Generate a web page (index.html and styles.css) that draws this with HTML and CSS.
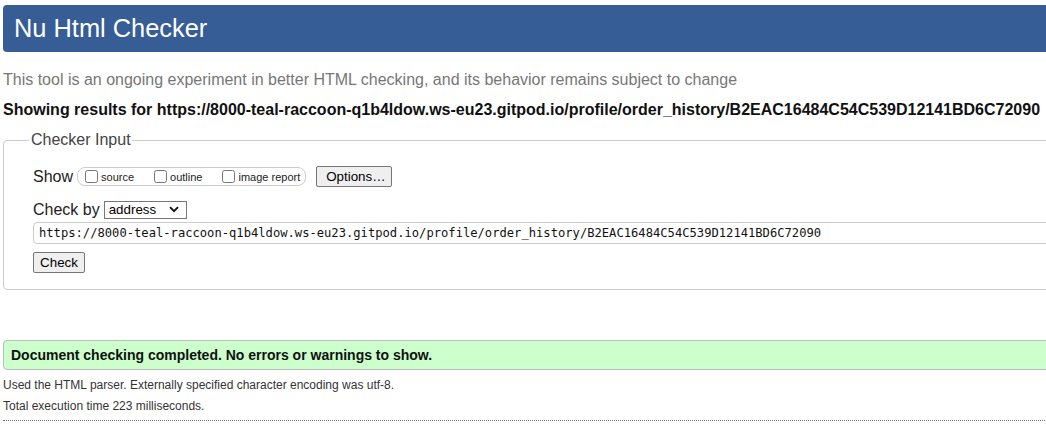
FILE: index.html
```html
<!DOCTYPE html>
<html lang="en">
<head>
<meta charset="utf-8">
<title>Showing results for https://8000-teal-raccoon-q1b4ldow.ws-eu23.gitpod.io/profile/order_history/B2EAC16484C54C539D12141BD6C72090 - Nu Html Checker</title>
<link rel="stylesheet" href="styles.css">
</head>
<body>
<div class="page">
  <h1 class="banner">Nu Html Checker</h1>
  <p class="intro">This tool is an ongoing experiment in better HTML checking, and its behavior remains subject to change</p>
  <p class="results-for">Showing results for https://8000-teal-raccoon-q1b4ldow.ws-eu23.gitpod.io/profile/order_history/B2EAC16484C54C539D12141BD6C72090</p>
  <form class="checker">
    <fieldset class="checker-fieldset">
      <legend class="checker-legend">Checker Input</legend>
      <div class="row show-row">
        <span class="row-label">Show</span>
        <span class="show-group">
          <label class="opt"><input type="checkbox" class="cb"><span class="opt-text">source</span></label>
          <label class="opt"><input type="checkbox" class="cb"><span class="opt-text">outline</span></label>
          <label class="opt last"><input type="checkbox" class="cb"><span class="opt-text">image report</span></label>
        </span>
        <button type="button" class="btn options-btn">Options…</button>
      </div>
      <div class="row checkby-row">
        <span class="row-label">Check by</span>
        <span class="select-wrap">
          <select class="select"><option>address</option></select>
          <svg class="chev" width="10" height="7" viewBox="0 0 10 7"><path d="M1 1.2 L5 5.2 L9 1.2" fill="none" stroke="#111" stroke-width="1.9"/></svg>
        </span>
      </div>
      <div class="row url-row">
        <input class="url" type="url" value="https://8000-teal-raccoon-q1b4ldow.ws-eu23.gitpod.io/profile/order_history/B2EAC16484C54C539D12141BD6C72090">
      </div>
      <div class="row submit-row">
        <button type="button" class="btn check-btn">Check</button>
      </div>
    </fieldset>
  </form>
  <div class="success">Document checking completed. No errors or warnings to show.</div>
  <p class="details">Used the HTML parser. Externally specified character encoding was utf-8.</p>
  <p class="details">Total execution time 223 milliseconds.</p>
  <hr class="dotted">
</div>
</body>
</html>
```
FILE: styles.css
```css
html, body {
  margin: 0;
  padding: 0;
  overflow: hidden;
  background: #fff;
}
body {
  font-family: "Liberation Sans", Arial, sans-serif;
  color: #111;
}
.page {
  padding: 5px 0 0 3px;
  width: 1080px;
}
.banner {
  margin: 0;
  height: 47px;
  line-height: 47px;
  padding-left: 11px;
  background: #365d95;
  color: #fff;
  font-size: 25.4px;
  font-weight: normal;
  border-radius: 4px;
}
.intro {
  margin: 19px 0 0;
  font-size: 16px;
  line-height: 18px;
  color: #777;
}
.results-for {
  margin: 12px 0 0;
  font-size: 16px;
  line-height: 18px;
  font-weight: bold;
  color: #111;
}
.checker {
  margin: 12px 0 0;
}
.checker-fieldset {
  margin: 0;
  padding: 17px 0 16px 29px;
  border: 1px solid #ccc;
  border-radius: 4px;
  min-width: 0;
}
.checker-legend {
  margin-left: -4px;
  padding: 0 1px 0 2px;
  font-size: 16px;
  line-height: 18px;
  color: #444;
}
.row {
  display: flex;
  align-items: center;
}
.row-label {
  font-size: 16px;
  line-height: 18px;
  color: #222;
}
.show-row {
  height: 21px;
}
.show-group {
  display: inline-flex;
  align-items: center;
  margin-left: 4px;
  height: 17px;
  padding: 0 5px 0 3px;
  border: 1px solid #ccc;
  border-radius: 8px;
}
.opt {
  display: inline-flex;
  align-items: center;
  font-size: 11px;
  color: #222;
  padding-right: 16px;
}
.opt-text {
  line-height: 13px;
  padding-top: 2px;
}
.opt.last {
  padding-right: 0;
}
.cb {
  width: 13px;
  height: 13px;
  margin: 0 3px 0 4px;
}
.btn {
  font-family: "Liberation Sans", Arial, sans-serif;
  font-size: 13.33px;
  color: #000;
  background: #efefef;
  border: 1px solid #767676;
  border-radius: 2px;
  height: 21px;
  line-height: 17px;
  padding: 0 6px;
}
.options-btn {
  margin-left: 10px;
  padding: 0 9px;
  width: 76px;
}
.checkby-row {
  margin-top: 13px;
  height: 20px;
}
.select-wrap {
  position: relative;
  display: inline-flex;
  margin-left: 4px;
}
.select {
  -webkit-appearance: none;
  appearance: none;
  width: 83px;
  height: 18px;
  padding: 0 0 0 4px;
  font-family: "Liberation Sans", Arial, sans-serif;
  font-size: 13.33px;
  line-height: 16px;
  color: #000;
  background: #fff;
  border: 1px solid #767676;
  border-radius: 0;
}
.chev {
  position: absolute;
  right: 8px;
  top: 5px;
  pointer-events: none;
}
.url-row {
  margin-top: 2px;
}
.url {
  width: 1040px;
  height: 22px;
  box-sizing: border-box;
  padding: 0 0 0 5px;
  font-family: "DejaVu Sans Mono", "Liberation Mono", monospace;
  font-size: 12.15px;
  color: #111;
  border: 1px solid #ccc;
  border-radius: 4px;
  background: #fff;
}
.submit-row {
  margin-top: 8px;
}
.check-btn {
  width: 52px;
}
.success {
  margin-top: 50px;
  height: 28px;
  line-height: 28px;
  padding-left: 7px;
  background: #ccffcc;
  border: 1px solid #bbb;
  border-radius: 4px;
  font-size: 14px;
  font-weight: bold;
  color: #111;
}
.details {
  margin: 8px 0 0;
  font-size: 12px;
  line-height: 14px;
  color: #333;
}
.details + .details {
  margin-top: 7px;
}
.dotted {
  margin: 7px 0 0;
  border: 0;
  border-top: 1px dotted #777;
  height: 0;
}
```
